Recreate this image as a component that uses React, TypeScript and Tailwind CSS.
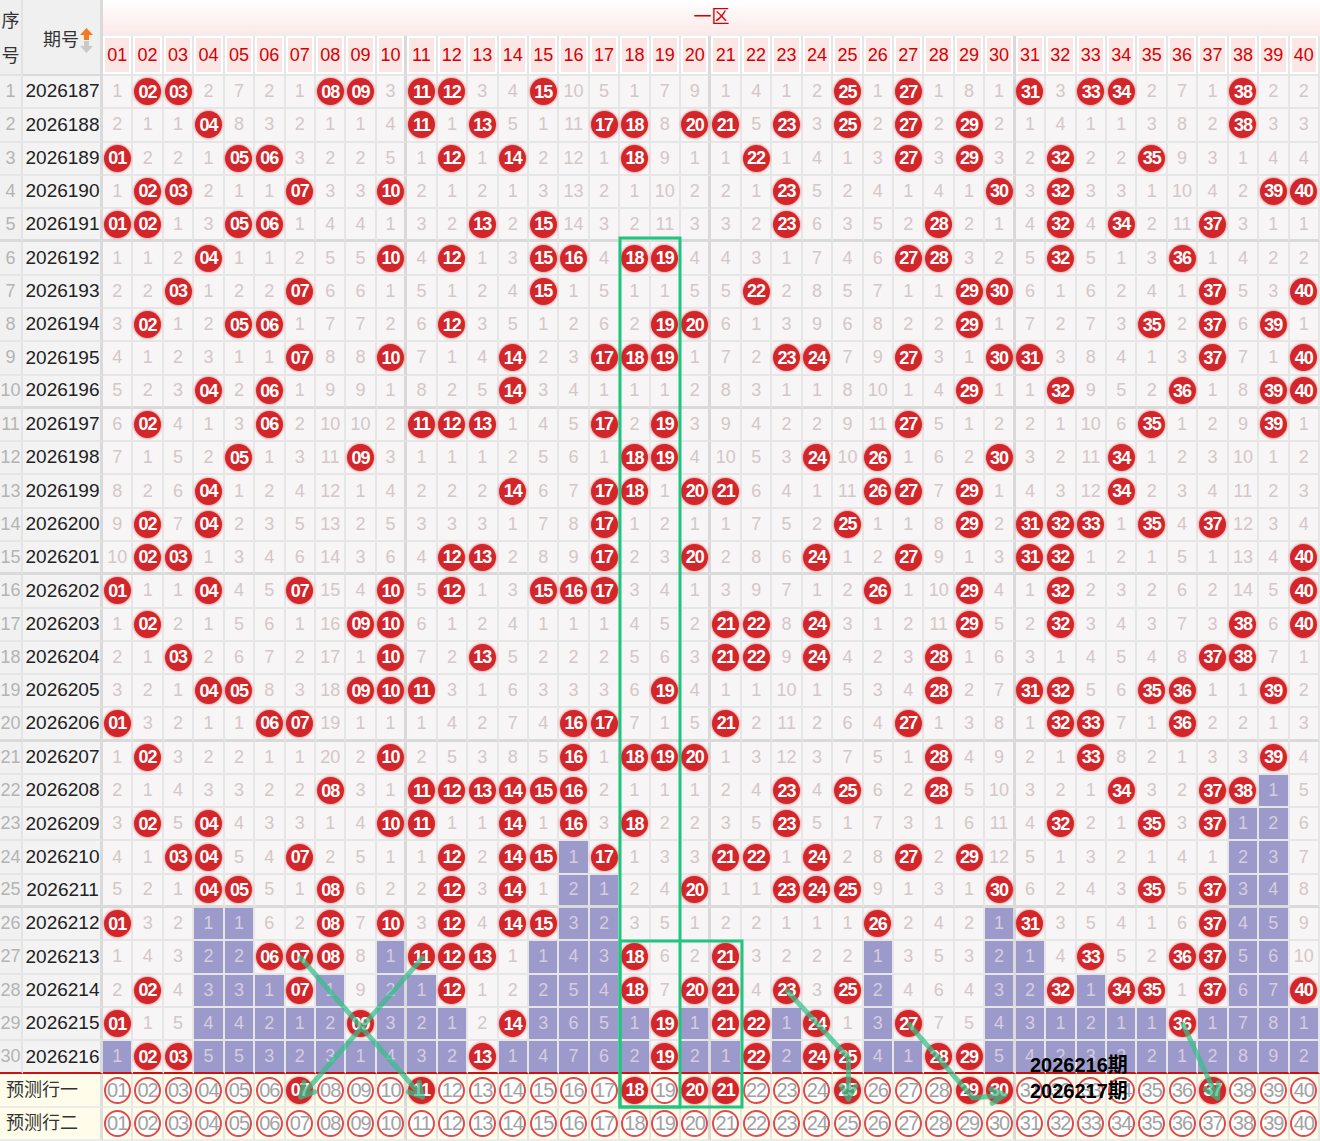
import React from "react";

// 30 draws, numbers hit in 一区 (1..40)
const HITS: number[][] = [
  [2, 3, 8, 9, 11, 12, 15, 25, 27, 31, 33, 34, 38],
  [4, 11, 13, 17, 18, 20, 21, 23, 25, 27, 29, 38],
  [1, 5, 6, 12, 14, 18, 22, 27, 29, 32, 35],
  [2, 3, 7, 10, 23, 30, 32, 39, 40],
  [1, 2, 5, 6, 13, 15, 23, 28, 32, 34, 37],
  [4, 10, 12, 15, 16, 18, 19, 27, 28, 32, 36],
  [3, 7, 15, 22, 29, 30, 37, 40],
  [2, 5, 6, 12, 19, 20, 29, 35, 37, 39],
  [7, 10, 14, 17, 18, 19, 23, 24, 27, 30, 31, 37, 40],
  [4, 6, 14, 29, 32, 36, 39, 40],
  [2, 6, 11, 12, 13, 17, 19, 27, 35, 39],
  [5, 9, 18, 19, 24, 26, 30, 34],
  [4, 14, 17, 18, 20, 21, 26, 27, 29, 34],
  [2, 4, 17, 25, 29, 31, 32, 33, 35, 37],
  [2, 3, 12, 13, 17, 20, 24, 27, 31, 32, 40],
  [1, 4, 7, 10, 12, 15, 16, 17, 26, 29, 32, 40],
  [2, 9, 10, 21, 22, 24, 29, 32, 38, 40],
  [3, 10, 13, 21, 22, 24, 28, 37, 38],
  [4, 5, 9, 10, 11, 19, 28, 31, 32, 35, 36, 39],
  [1, 6, 7, 16, 17, 21, 27, 32, 33, 36],
  [2, 10, 16, 18, 19, 20, 28, 33, 39],
  [8, 11, 12, 13, 14, 15, 16, 23, 25, 28, 34, 37, 38],
  [2, 4, 10, 11, 14, 16, 18, 23, 32, 35, 37],
  [3, 4, 7, 12, 14, 15, 17, 21, 22, 24, 27, 29],
  [4, 5, 8, 12, 14, 20, 23, 24, 25, 30, 35, 37],
  [1, 8, 10, 12, 14, 15, 26, 31, 37],
  [6, 7, 8, 11, 12, 13, 18, 21, 33, 36, 37],
  [2, 7, 12, 18, 20, 21, 23, 25, 32, 34, 35, 37, 40],
  [1, 9, 14, 19, 21, 22, 24, 27, 36],
  [2, 3, 13, 19, 22, 24, 25, 28, 29],
];

// omission shown in the first row for numbers not drawn there
const INIT: Record<number, number> = {
  1: 1, 4: 2, 5: 7, 6: 2, 7: 1, 10: 3, 13: 3, 14: 4, 16: 10, 17: 5, 18: 1, 19: 7, 20: 9,
  21: 1, 22: 4, 23: 1, 24: 2, 26: 1, 28: 1, 29: 8, 30: 1, 32: 3, 35: 2, 36: 7, 37: 1, 39: 2, 40: 2,
};

const PRED_HITS = [7, 11, 18, 20, 21, 25, 29, 30, 37];
const COLS = Array.from({ length: 40 }, (_, i) => i + 1);
const pad = (n: number) => String(n).padStart(2, "0");

type Cell = { hit: boolean; miss: number; tail: boolean };

function buildRows(): Cell[][] {
  const last = COLS.map((c) => {
    let l = -1;
    HITS.forEach((h, r) => {
      if (h.includes(c)) l = r;
    });
    return l;
  });
  const miss = COLS.map((c) => (INIT[c] ?? 1) - 1);
  return HITS.map((hits, r) =>
    COLS.map((c, i) => {
      if (hits.includes(c)) {
        miss[i] = 0;
        return { hit: true, miss: 0, tail: false };
      }
      miss[i] += 1;
      return { hit: false, miss: miss[i], tail: r > last[i] };
    })
  );
}

const ROWS = buildRows();

const COLW = 1217 / 40;
const ROWH = 1065 / 32;
const X = (c: number) => 103 + (c - 0.5) * COLW;
const Y = (r: number) => 76 + (r - 0.5) * ROWH;

const ARROWS: [number, number][][] = [
  [[X(7), Y(27)], [X(11), 1097]],
  [[X(11), Y(27)], [X(7), 1097]],
  [[X(23), Y(28)], [X(25), Y(30)], [X(25), 1099]],
  [[X(27), Y(29)], [X(29) + 3, 1098], [X(30) + 4, 1095]],
  [[X(36), Y(29)], [X(37) + 4, 1098]],
];

const rightBorder = (c: number) =>
  c % 10 === 0 && c !== 40 ? "border-r-[3px] border-r-[#d9d9d9]" : "border-r-2 border-r-[#e6e6e6]";

const bottomBorder = (r: number) =>
  r === 30
    ? "border-b-2 border-b-[#cf1010]"
    : r % 5 === 0
      ? "border-b-[3px] border-b-[#dadada]"
      : "border-b-2 border-b-[#e6e6e6]";

const Ball = ({ n }: { n: number }) => (
  <span className="flex h-[27px] w-[27px] items-center justify-center rounded-full bg-[#d3262a] text-[18px] font-bold leading-none tracking-[-1px] text-white shadow-[0_0_2px_1px_rgba(225,80,80,0.45)]">
    {pad(n)}
  </span>
);

const Ring = ({ n }: { n: number }) => (
  <span className="flex h-[27px] w-[27px] items-center justify-center rounded-full border-2 border-[#e04a4a] bg-white text-[20px] leading-none tracking-[-1px] text-[#a2a2a2]">
    {pad(n)}
  </span>
);

const SortIcon = () => (
  <svg width="13" height="25" viewBox="0 0 13 25" className="ml-[1px]">
    <path d="M6.5 0 L13 7 H9 V12 H4 V7 H0 Z" fill="#f57a1f" />
    <path d="M6.5 25 L13 18 H9 V13 H4 V18 H0 Z" fill="#c9c9c9" />
  </svg>
);

function arrowHead(pts: [number, number][]) {
  const [ex, ey] = pts[pts.length - 1];
  const [px, py] = pts[pts.length - 2];
  const a = Math.atan2(ey - py, ex - px);
  const L = 15;
  const w1 = [ex - L * Math.cos(a - 0.5), ey - L * Math.sin(a - 0.5)];
  const w2 = [ex - L * Math.cos(a + 0.5), ey - L * Math.sin(a + 0.5)];
  return `${w1[0]},${w1[1]} ${ex},${ey} ${w2[0]},${w2[1]}`;
}

export default function App() {
  return (
    <div className="relative h-[1141px] w-[1320px] overflow-hidden bg-white font-[Liberation_Sans,Noto_Sans_CJK_SC,sans-serif]">
      <div className="grid h-full w-full grid-cols-[23px_80px_repeat(40,minmax(0,1fr))] grid-rows-[36px_40px_repeat(32,minmax(0,1fr))]">
        {/* header */}
        <div className="row-span-2 flex flex-col items-center justify-around border-r-2 border-b-2 border-[#e2e2e2] bg-[#efefef] pt-[3px] text-[18px] leading-none text-[#333]">
          <span>序</span>
          <span>号</span>
        </div>
        <div className="row-span-2 flex items-center justify-end border-r-[3px] border-b-2 border-[#dadada] bg-[#f0f0f0] pt-[6px] pr-[7px] text-[18px] text-[#333]">
          <span>期号</span>
          <SortIcon />
        </div>
        <div className="col-span-40 flex items-center justify-center border-b-2 border-[#eee] bg-linear-to-b from-white to-[#fce9e9] text-[18px] text-[#d40000]">
          一区
        </div>
        {COLS.map((c) => (
          <div key={`h${c}`} className={`border-b-2 border-b-[#e6e6e6] bg-white p-[2px] ${rightBorder(c)}`}>
            <div className="flex h-full items-center justify-center bg-[#fbe6e6] text-[18px] text-[#d40000]">{pad(c)}</div>
          </div>
        ))}

        {/* draw rows */}
        {ROWS.map((row, r) => (
          <React.Fragment key={`r${r}`}>
            <div className={`flex items-center justify-center border-r-2 border-r-[#e4e4e4] bg-[#f1f1f1] text-[18px] text-[#b4b4b4] ${bottomBorder(r + 1)}`}>
              {r + 1}
            </div>
            <div className={`flex items-center justify-center border-r-[3px] border-r-[#dadada] bg-[#f3f3f3] pl-[2px] text-[19px] text-[#222] ${bottomBorder(r + 1)}`}>
              {2026187 + r}
            </div>
            {row.map((cell, i) => (
              <div
                key={`c${r}-${i}`}
                className={`flex items-center justify-center text-[18px] ${rightBorder(i + 1)} ${bottomBorder(r + 1)} ${
                  cell.tail ? "bg-[#9c9aca] text-[#d5cde0]" : "bg-[#f7f5f6] text-[#d4c7c7]"
                }`}
              >
                {cell.hit ? <Ball n={i + 1} /> : cell.miss}
              </div>
            ))}
          </React.Fragment>
        ))}

        {/* prediction rows */}
        {["预测行一", "预测行二"].map((label, p) => (
          <React.Fragment key={label}>
            <div className="col-span-2 flex items-center border-r-[3px] border-b-2 border-r-[#dedede] border-b-[#ececec] bg-[#fffdea] pl-[6px] text-[18px] text-[#333]">
              {label}
            </div>
            {COLS.map((c) => (
              <div key={`p${p}-${c}`} className={`flex items-center justify-center border-b-2 border-b-[#ececec] bg-[#fffdea] ${rightBorder(c)}`}>
                {p === 0 && PRED_HITS.includes(c) ? <Ball n={c} /> : <Ring n={c} />}
              </div>
            ))}
          </React.Fragment>
        ))}
      </div>

      {/* overlay marks */}
      <svg className="pointer-events-none absolute inset-0" width="1320" height="1141" viewBox="0 0 1320 1141">
        <g fill="none" stroke="#1fc67e" strokeWidth="3">
          <rect x="620" y="238" width="60" height="869" />
          <rect x="620" y="941" width="122" height="166" />
        </g>
        <g opacity="0.72" fill="none" stroke="#34c08a" strokeWidth="5" strokeLinecap="round" strokeLinejoin="round">
          {ARROWS.map((pts, i) => (
            <React.Fragment key={i}>
              <polyline points={pts.map((p) => p.join(",")).join(" ")} />
              <polyline points={arrowHead(pts)} />
            </React.Fragment>
          ))}
        </g>
      </svg>

      <div className="pointer-events-none absolute left-[1030px] top-[1052px] text-[20px] font-bold leading-[26px] text-black">
        <div>2026216期</div>
        <div>2026217期</div>
      </div>
    </div>
  );
}
